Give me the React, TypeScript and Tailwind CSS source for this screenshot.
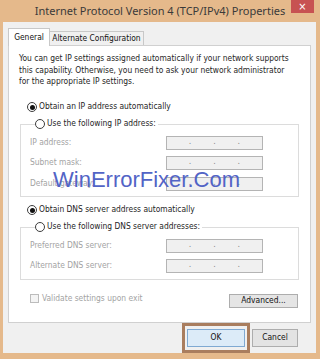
import React from "react";

const uiFont = { fontFamily: "'DejaVu Sans Condensed', 'DejaVu Sans', 'Liberation Sans', sans-serif" };

function Radio({ checked }: { checked?: boolean }) {
  return (
    <span className="flex h-[10px] w-[10px] shrink-0 items-center justify-center rounded-full border border-[#3c3c3c] bg-white">
      {checked && <span className="h-[5px] w-[5px] rounded-full bg-[#111]" />}
    </span>
  );
}

function IpBox() {
  return (
    <div className="flex h-[14px] w-[97px] items-center border border-[#b4b4b4] bg-[#f0f0f0] text-[9px] leading-none text-[#8a8a8a]">
      <span className="flex-1" />
      <span className="-mt-[3px]">.</span>
      <span className="flex-1" />
      <span className="-mt-[3px]">.</span>
      <span className="flex-1" />
      <span className="-mt-[3px]">.</span>
      <span className="flex-1" />
    </div>
  );
}

function FieldRow({ label }: { label: string }) {
  return (
    <div className="flex h-[14px] items-center">
      <span className="w-[136px] text-[#a3a3a3]">{label}</span>
      <IpBox />
    </div>
  );
}

export default function App() {
  return (
    <div className="flex h-[359px] w-[320px] flex-col bg-[#e5b98b]" style={uiFont}>
      {/* title bar */}
      <div className="flex h-[22px] shrink-0 items-start pl-[29px] pr-[6px]">
        <div
          className="flex h-[22px] flex-1 items-center justify-center whitespace-nowrap text-[11px] text-[#3a3a3a]"
          style={{ fontFamily: "'Noto Sans', 'Open Sans', sans-serif" }}
        >
          Internet Protocol Version 4 (TCP/IPv4) Properties
        </div>
        <div className="flex h-[13px] w-[23px] items-center justify-center bg-[#c75252] text-[11px] leading-none text-white">
          ×
        </div>
      </div>

      {/* body */}
      <div className="mb-[6px] ml-[3px] mr-[4px] flex flex-1 flex-col bg-[#f0f0f0] text-[8.4px] leading-[11.5px] text-[#1e1e1e]">
        {/* tabs */}
        <div className="mt-[6px] flex h-[17px] items-end pl-[5px]">
          <div className="relative z-10 -mb-px flex h-[18px] w-[42px] items-center justify-center border border-b-0 border-[#c8c8c8] bg-white text-[#111]">
            General
          </div>
          <div className="-ml-px flex h-[14px] w-[95px] items-center justify-center border border-b-0 border-[#c8c8c8] bg-[#f0f0f0] text-[#111]">
            Alternate Configuration
          </div>
        </div>

        {/* panel */}
        <div className="relative mx-[5px] flex h-[278px] flex-col border border-[#d0d0d0] bg-white">
          <p className="pl-[10px] pt-[7px]">
            You can get IP settings assigned automatically if your network supports
            <br />
            this capability. Otherwise, you need to ask your network administrator
            <br />
            for the appropriate IP settings.
          </p>

          <div className="mt-[14px] flex h-[11px] items-center gap-[2px] pl-[18px]">
            <Radio checked />
            <span>Obtain an IP address automatically</span>
          </div>

          <fieldset className="ml-[11px] mr-[11px] mt-[6px] border border-[#dcdcdc] pb-[5px] pl-[9px]">
            <legend className="ml-[5px] flex h-[11px] items-center gap-[2px] pr-[2px]">
              <Radio />
              <span>Use the following IP address:</span>
            </legend>
            <div className="mt-[6px] flex flex-col gap-[6.5px]">
              <FieldRow label="IP address:" />
              <FieldRow label="Subnet mask:" />
              <FieldRow label="Default gateway:" />
            </div>
          </fieldset>

          <div className="mt-[8px] flex h-[11px] items-center gap-[2px] pl-[18px]">
            <Radio checked />
            <span>Obtain DNS server address automatically</span>
          </div>

          <fieldset className="ml-[11px] mr-[11px] mt-[6px] border border-[#dcdcdc] pb-[6px] pl-[9px]">
            <legend className="ml-[5px] flex h-[11px] items-center gap-[2px] pr-[2px]">
              <Radio />
              <span>Use the following DNS server addresses:</span>
            </legend>
            <div className="mt-[6px] flex flex-col gap-[6px]">
              <FieldRow label="Preferred DNS server:" />
              <FieldRow label="Alternate DNS server:" />
            </div>
          </fieldset>

          <div className="mt-[14px] flex items-start pl-[21px] pr-[12px]">
            <div className="flex h-[10px] items-center gap-[3px] text-[#a3a3a3]">
              <span className="h-[9px] w-[9px] border border-[#bcbcbc] bg-[#f4f4f4]" />
              <span>Validate settings upon exit</span>
            </div>
            <div className="ml-auto flex h-[14px] w-[69px] items-center justify-center border border-[#adadad] bg-[#e5e5e5] text-[#111]">
              Advanced...
            </div>
          </div>

          {/* watermark */}
          <div
            className="pointer-events-none absolute left-[44px] top-[121px] whitespace-nowrap text-[22px] leading-[25px] text-[#5264c6]"
            style={{ fontFamily: "'Liberation Sans', Arial, sans-serif" }}
          >
            WinErrorFixer.Com
          </div>
        </div>

        {/* buttons */}
        <div className="flex h-[30px] items-center justify-end pr-[18px]">
          <div className="flex h-[30px] w-[68px] items-center justify-center border-[3px] border-[#a97d5e]">
            <div className="flex h-[18px] w-[58px] items-center justify-center border border-[#7fa9d2] bg-[#dcebf8] text-[#111]">
              OK
            </div>
          </div>
          <div className="ml-[2px] flex h-[18px] w-[46px] items-center justify-center border border-[#adadad] bg-[#e3e3e3] text-[#111]">
            Cancel
          </div>
        </div>
      </div>
    </div>
  );
}
